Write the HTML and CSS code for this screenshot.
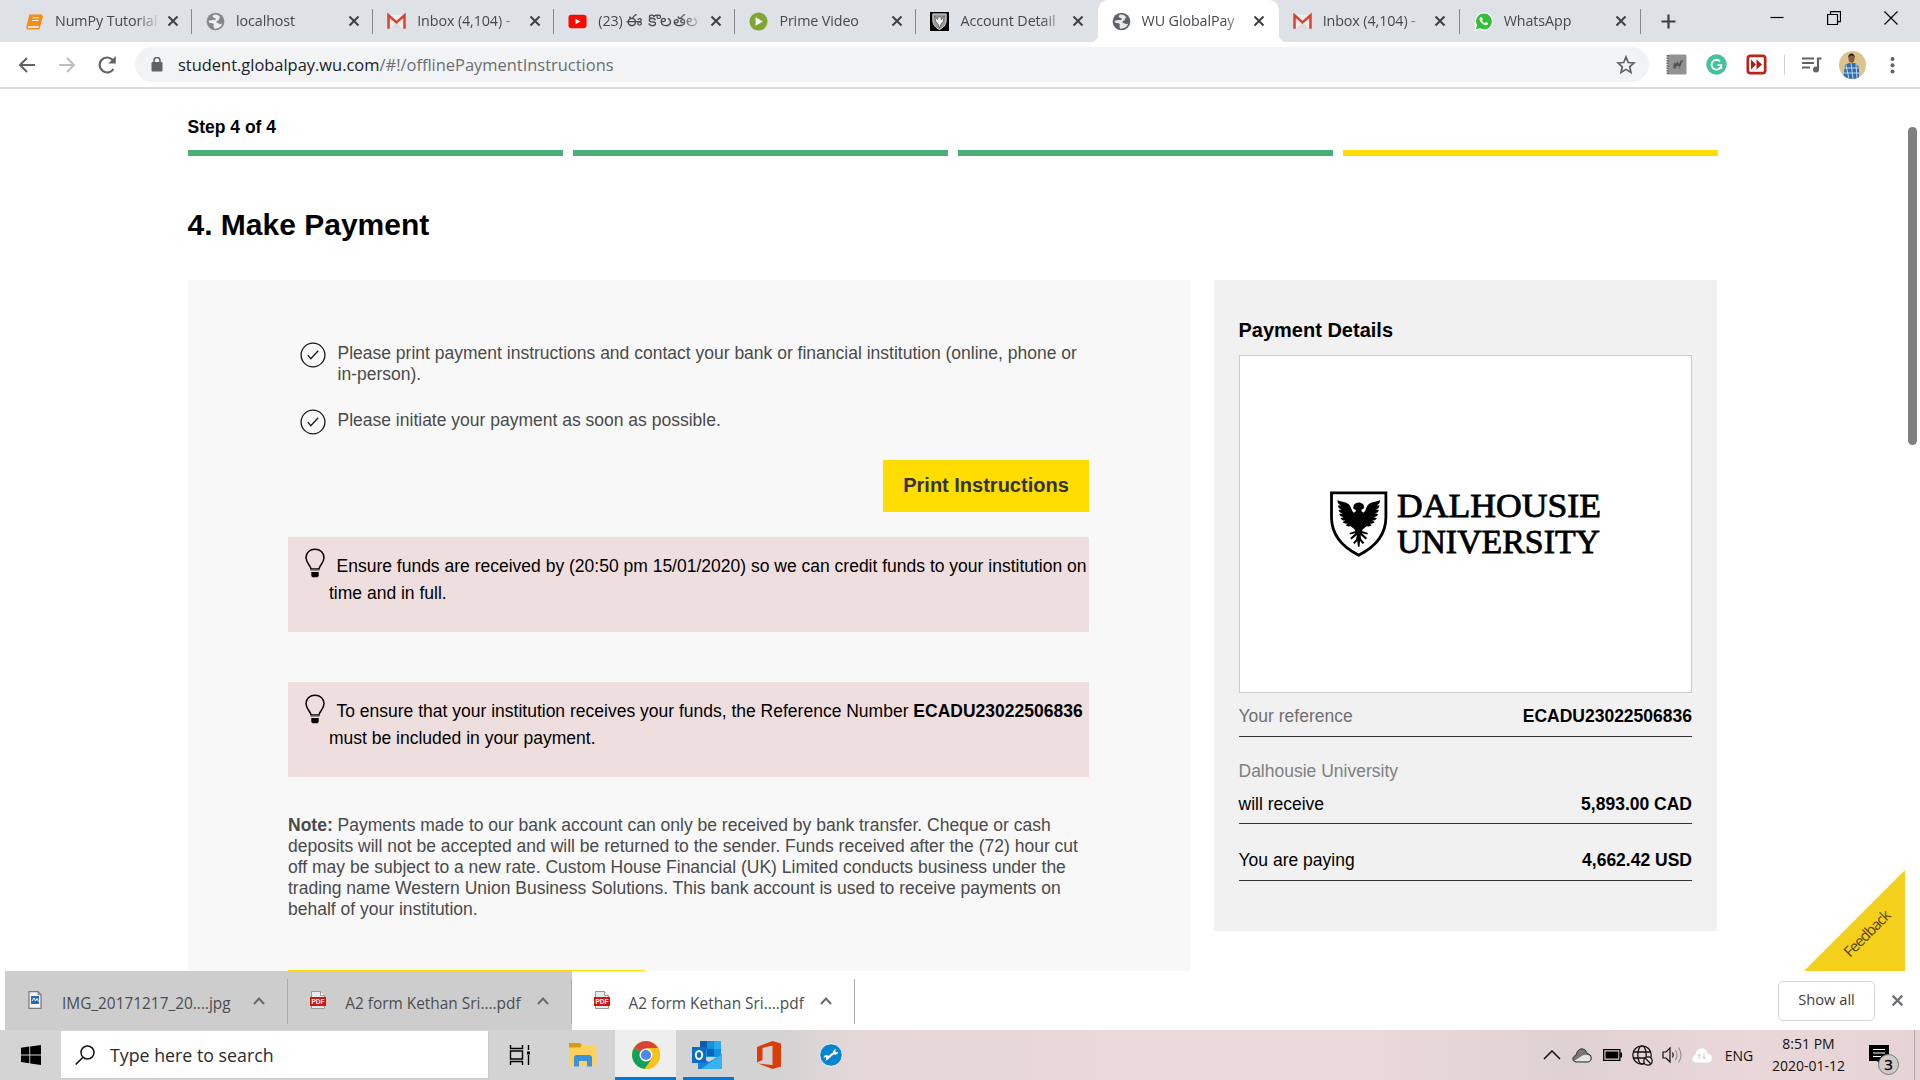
FILE: index.html
```html
<!DOCTYPE html>
<html lang="en">
<head>
<meta charset="utf-8">
<title>WU GlobalPay</title>
<link rel="stylesheet" href="styles.css">
</head>
<body>
<svg width="0" height="0" class="defs" aria-hidden="true">
  <defs>
    <symbol id="x" viewBox="0 0 12 12"><path d="M1.500 1.500l9 9M10.500 1.500l-9 9" stroke="currentColor" stroke-width="2" fill="none"/></symbol>
    <symbol id="globe" viewBox="0 0 20 20"><circle cx="10" cy="10" r="9.300" fill="currentColor"/><path d="M9 2.600c-1.800.5-2.500 2-1.500 3 1 .9 2.600.3 2.700 1.700.1 1.300-1.600 1.200-3.200 1.200-1.400 0-2.200.9-4.300.5.1 1.200.5 2 1.200 2.500 1.300.2 2.600-.1 3.600.7 1 .7.7 1.600.4 2.500-.3 1 .6 1.400.8 2.800 3.800.4 7.600-1.800 8.400-5.600-1.500 1.400-2.600 1.200-3.400.3-.9-1-2.600-.5-2.700-1.800-.1-1.600 2.100-1 2.500-2.300.3-1.200.5-2 1.700-2.300C13.600 3.400 11.500 2.300 9 2.600z" fill="#fff" opacity=".85"/></symbol>
    <symbol id="gmail" viewBox="0 0 20 16"><path d="M1 1h18v14H1z" fill="#eee"/><path d="M4 15l6-6 6 6z" fill="#ddd"/><path d="M1.600 15.500V1.500L10 9l8.400-7.500v14" fill="none" stroke="#d8412f" stroke-width="2.600"/></symbol>
    <symbol id="pdf" viewBox="0 0 18 18"><path d="M2.500.5h9l4 4v13h-13z" fill="#e9e9e9" stroke="#999"/><path d="M11.500.5v4h4" fill="#fff" stroke="#999"/><path d="M1 6h16v9H1z" fill="#d8120c"/><text x="9" y="13" font-size="6.500" font-weight="700" fill="#fff" text-anchor="middle" font-family="Liberation Sans, sans-serif">PDF</text></symbol>
    <symbol id="up" viewBox="0 0 12 8"><path d="M1 7l5-5.500L11 7" fill="none" stroke="#6a6a6a" stroke-width="2"/></symbol>
    <symbol id="check" viewBox="0 0 26 26"><circle cx="13" cy="13" r="11.900" fill="none" stroke="#1a1a1a" stroke-width="1.300"/><path d="M7.800 13.200l3 3.500 7.400-7.900" fill="none" stroke="#1a1a1a" stroke-width="1.300"/></symbol>
    <symbol id="bulb" viewBox="0 0 20 30"><path d="M6 21c-.3-3.500-5-6-5-11.500C1 4.500 5 1.200 10 1.200s9 3.300 9 8.300C19 15 14.300 17.500 14 21z" fill="none" stroke="#000" stroke-width="1.500"/><path d="M5.500 21.500h9v1.300h-9z" fill="#777"/><path d="M6.300 24h7.400v4l-1.200 1.200h-5L6.300 28z"/></symbol>
  </defs>
</svg>

<header class="tabs">
  <div class="tab"><svg class="fav" viewBox="0 0 20 20"><path d="M5.500 2.500h12.500l-3 12.500H2.500z" fill="#f68c12"/><path d="M5.500 2.500L2.300 15.500q-.3 2.200 1.700 2.200h10.500L18.300 4" fill="none" stroke="#f68c12" stroke-width="1.700"/><path d="M8 6h7M7.300 9h7M3.500 15.800h11" stroke="#fff" stroke-width="1.200"/></svg><span class="tab-name">NumPy Tutorial</span><svg class="close"><use href="#x"/></svg></div>
  <div class="tab"><svg class="fav gray"><use href="#globe"/></svg><span class="tab-name">localhost</span><svg class="close"><use href="#x"/></svg></div>
  <div class="tab"><svg class="fav"><use href="#gmail"/></svg><span class="tab-name">Inbox (4,104) -</span><svg class="close"><use href="#x"/></svg></div>
  <div class="tab"><svg class="fav" viewBox="0 0 20 20"><rect x=".5" y="3" width="19" height="14" rx="3" fill="#f60c00"/><path d="M8 7v6l5-3z" fill="#fff"/></svg><span class="tab-name">(23) <span class="telugu">ఈ కొలతల</span></span><svg class="close"><use href="#x"/></svg></div>
  <div class="tab"><svg class="fav" viewBox="0 0 20 20"><circle cx="10" cy="10" r="9.500" fill="#7fa534"/><path d="M7 5.500v9l7.500-4.500z" fill="#fff"/></svg><span class="tab-name">Prime Video</span><svg class="close"><use href="#x"/></svg></div>
  <div class="tab last"><svg class="fav" viewBox="0 0 20 20"><path d="M0 0h20v20H0z"/><path d="M3 2h14v7c0 4.500-3 7.500-7 9.500-4-2-7-5-7-9.500z" fill="#999" stroke="#ddd"/><path d="M5 4l1 6 2.500 3 1.500 4 1.500-4L14 10l1-6-3 4-.5-3h-3L8 8z" fill="#eee" stroke="#333" stroke-width=".6"/></svg><span class="tab-name">Account Detail</span><svg class="close"><use href="#x"/></svg></div>
  <div class="tab active"><svg class="fav dark"><use href="#globe"/></svg><span class="tab-name">WU GlobalPay</span><svg class="close"><use href="#x"/></svg></div>
  <div class="tab"><svg class="fav"><use href="#gmail"/></svg><span class="tab-name">Inbox (4,104) -</span><svg class="close"><use href="#x"/></svg></div>
  <div class="tab"><svg class="fav" viewBox="0 0 20 20"><path d="M1 19l1.500-5A9 9 0 1 1 6 17.700z" fill="#35bd3c" stroke="#fff" stroke-width="1.300"/><path d="M6.500 5.500c-1.500 1.600-.5 4 1.600 6s4.600 3.200 6.300 1.600c.5-.6.500-1.200.2-1.500l-1.900-1-1.400 1.200c-1.300-.6-2.300-1.600-2.900-2.700l.9-1.200L8.500 5.500z" fill="#fff"/></svg><span class="tab-name">WhatsApp</span><svg class="close"><use href="#x"/></svg></div>
  <svg class="plus" viewBox="0 0 15 15"><path d="M7.500.5v14M.5 7.500h14" stroke="#3c4043" stroke-width="2.200"/></svg>
  <div class="window-buttons">
    <svg viewBox="0 0 14 14"><path d="M.5 6.500h13" stroke="#000" stroke-width="1.200"/></svg>
    <svg viewBox="0 0 14 14"><path d="M.6 3.500h9.900v10H.6zM3.500 3.500V.6h10v10h-3" fill="none" stroke="#000" stroke-width="1.200"/></svg>
    <svg viewBox="0 0 14 14"><path d="M.5.500l13 13M13.500.5l-13 13" stroke="#000" stroke-width="1.200"/></svg>
  </div>
</header>

<nav class="toolbar">
  <div class="cell"><svg width="18" height="16" viewBox="0 0 18 16"><path d="M17 8H2M9 1L2 8l7 7" fill="none" stroke="#5f6368" stroke-width="2"/></svg></div>
  <div class="cell"><svg width="18" height="16" viewBox="0 0 18 16"><path d="M1 8h15M9 1l7 7-7 7" fill="none" stroke="#bdbfc2" stroke-width="2"/></svg></div>
  <div class="cell"><svg width="19" height="18" viewBox="0 0 19 18"><path d="M15.500 13A7.500 7.500 0 1 1 14.500 3.700l2 2.200" fill="none" stroke="#5f6368" stroke-width="2.200"/><path d="M17.800 0v7.500h-7.500z" fill="#5f6368"/></svg></div>
  <div class="omnibox">
    <svg width="12" height="15" viewBox="0 0 12 15"><rect x=".5" y="5" width="11" height="9.500" rx="1.200" fill="#5f6368"/><path d="M3 6V3.500a3 3 0 0 1 6 0V6" fill="none" stroke="#5f6368" stroke-width="1.600"/></svg>
    <span class="url"><b>student.globalpay.wu.com</b>/#!/offlinePaymentInstructions</span>
    <svg width="20" height="19" viewBox="0 0 20 19"><path d="M10 2l2.300 5.500 5.700.5-4.300 3.800 1.300 5.700-5-3.100-5 3.100 1.300-5.700L2 8l5.700-.5z" fill="none" stroke="#5f6368" stroke-width="1.700"/></svg>
  </div>
  <div class="tools">
    <div class="cell"><svg width="21" height="21" viewBox="0 0 21 21"><rect x="1.500" y=".5" width="19" height="20" rx="1.500" fill="#929292"/><path d="M1.500 1v19" stroke="#666" stroke-width="2" stroke-dasharray="1.500 1"/><path d="M7.500 14.500V10.500l1.500-2 1.200 1.200L11.500 7.500l1.200 2 .8.300 1-3.300h2.500v1.300h-1.300l-1 4.200h-.6v2.500h-.8V12h-2.600l-1.500 2.500z" fill="#505050"/></svg></div>
    <div class="cell"><svg width="21" height="21" viewBox="0 0 21 21"><circle cx="10.500" cy="10.500" r="10.200" fill="#43c39a"/><path d="M14 7.300A4.900 4.900 0 1 0 15.300 11.200H11.500M15.300 11v4" fill="none" stroke="#fff" stroke-width="1.800"/></svg></div>
    <div class="cell"><svg width="21" height="21" viewBox="0 0 21 21"><rect x=".5" y=".5" width="20" height="20" rx="4" fill="#b92318"/><rect x="3.200" y="3.200" width="14.600" height="14.600" rx="1" fill="#fff"/><path d="M5 5.500l5 5-5 5zM10.500 5.500l5.500 5-5.500 5z" fill="#a81d14"/></svg></div>
    <i class="divider"></i>
    <div class="cell music"><svg width="20" height="17" viewBox="0 0 20 17"><path d="M0 2.500h12M0 7h12M0 11.500h8" stroke="#5f6368" stroke-width="2.100"/><path d="M19.500 2.500H16v11" fill="none" stroke="#5f6368" stroke-width="2.200"/><circle cx="14" cy="13.500" r="3" fill="#5f6368"/></svg></div>
    <div class="cell avatar"><svg width="27" height="28" viewBox="0 0 27 28"><defs><clipPath id="face"><ellipse cx="13.500" cy="14" rx="13.500" ry="14"/></clipPath></defs><g clip-path="url(#face)"><path d="M0 0h27v28H0z" fill="#dcc58c"/><path d="M6 14l4-2h6l4 4v12H4z" fill="#2f6cb0"/><path d="M7 14l3 14M12 12l2 16M17 13l1 15M5 17h15M4 22h16" stroke="#c3d7ea" stroke-width="1"/><ellipse cx="12.500" cy="7.500" rx="3" ry="4.300" fill="#8a5b3f"/><path d="M9 7c0-6 7-6 7 0l-1.500-2.500h-4z" fill="#1c1715"/></g></svg></div>
    <div class="cell dots"><svg width="5" height="18" viewBox="0 0 5 18"><g fill="#5f6368"><circle cx="2.500" cy="3" r="2"/><circle cx="2.500" cy="9.200" r="2"/><circle cx="2.500" cy="15.400" r="2"/></g></svg></div>
  </div>
</nav>

<main class="page">
  <p class="step">Step 4 of 4</p>
  <div class="progress"><i></i><i></i><i></i><i class="current"></i></div>
  <h1>4. Make Payment</h1>
  <div class="columns">
    <section class="instructions">
      <div class="item"><svg><use href="#check"/></svg><p>Please print payment instructions and contact your bank or financial institution (online, phone or<br>in-person).</p></div>
      <div class="item"><svg><use href="#check"/></svg><p>Please initiate your payment as soon as possible.</p></div>
      <button class="print">Print Instructions</button>
      <div class="alert"><svg><use href="#bulb"/></svg><p>Ensure funds are received by (20:50 pm 15/01/2020) so we can credit funds to your institution on<br>time and in full.</p></div>
      <div class="alert second"><svg><use href="#bulb"/></svg><p>To ensure that your institution receives your funds, the Reference Number <b>ECADU23022506836</b><br>must be included in your payment.</p></div>
      <p class="note"><b>Note:</b> Payments made to our bank account can only be received by bank transfer. Cheque or cash<br>deposits will not be accepted and will be returned to the sender. Funds received after the (72) hour cut<br>off may be subject to a new rate. Custom House Financial (UK) Limited conducts business under the<br>trading name Western Union Business Solutions. This bank account is used to receive payments on<br>behalf of your institution.</p>
      <div class="next-button"></div>
    </section>
    <aside class="details">
      <h2>Payment Details</h2>
      <div class="logo">
        <svg width="280" height="76" viewBox="-4 -4 280 76">
          <path d="M1.500 2.800h54.400v24.500C55.900 46 44 57.500 28.700 65.200 13.400 57.500 1.500 46 1.500 27.300z" fill="#fff" stroke="#000" stroke-width="2.800"/>
          <path d="M7.500 10c3.500 2.500 8 1 11.500 4.500 2.300 2.500 2.500 6 4.500 8 1.800.3 2.600-1.200 2.400-2.600l-2.700-1.400.5-3.400c2-3.400 7-3.500 9.300-.8 1.400 1.600 1.200 3.400.4 4.500l-2 .6c0 1.600.8 3.200 2.500 3.100 2-2 2.200-5.500 4.500-8C42 11 46.500 12.500 50 10c.2 3-1 4.500-3.500 5.200l3 .3c-.3 2.400-1.600 3.500-4 3.900l3.400.5c-.7 2.300-2 3.200-4.300 3.400l3.500.8c-.8 2.200-2.300 3-4.500 3l3.200 1.100c-1 2-2.700 2.600-4.800 2.300l2.700 1.500c-1.300 1.700-3 2-5 1.500l2 1.800c-1.500 1.300-3.300 1.400-5 .6-1.600 2-4.700 3-4.700 5.200l6 1.800-.8 1.600-5.400-1.600 5.300 5-1.300 1.600-5.300-4.500.8 4.300 3 3.500-1.500 1.300-2.700-3-.6 5.700h-1.600l-.6-5.700-2.700 3-1.500-1.300 3-3.500.8-4.300-5.300 4.500-1.300-1.600 5.300-5-5.400 1.600-.8-1.600 6-1.800c0-2.200-3.100-3.200-4.700-5.200-1.700.8-3.500.7-5-.6l2-1.800c-2 .5-3.700.2-5-1.500l2.700-1.500c-2.100.3-3.800-.3-4.800-2.300l3.200-1.100c-2.200 0-3.700-.8-4.500-3l3.500-.8c-2.300-.2-3.600-1.100-4.300-3.400l3.400-.5c-2.400-.4-3.700-1.500-4-3.900l3-.3C8.500 14.500 7.300 13 7.500 10z"/>
          <g font-family="Liberation Serif, serif" font-size="33.500" stroke="#000" stroke-width=".8">
            <text x="67" y="27" textLength="204" lengthAdjust="spacingAndGlyphs">DALHOUSIE</text>
            <text x="67" y="62.600" textLength="203" lengthAdjust="spacingAndGlyphs">UNIVERSITY</text>
          </g>
        </svg>
      </div>
      <div class="row ref"><span class="muted">Your reference</span><b>ECADU23022506836</b></div>
      <p class="payee">Dalhousie University</p>
      <div class="row receive"><span>will receive</span><b>5,893.00 CAD</b></div>
      <div class="row paying"><span>You are paying</span><b>4,662.42 USD</b></div>
    </aside>
  </div>
  <div class="scrollbar"></div>
  <div class="feedback"><svg width="101" height="101" viewBox="0 0 101 101"><path d="M101 0v101H0z" fill="#f4cf1b"/><text transform="translate(46 88) rotate(-45)" font-size="15" textLength="59" fill="#504310" font-family="Open Sans, sans-serif">Feedback</text></svg></div>
</main>

<div class="downloads">
  <div class="file old"><svg viewBox="0 0 18 18"><path d="M3 .7h9l3 3v13.600H3z" fill="#f4f4f4" stroke="#777" stroke-width="1.200"/><path d="M12 .7v3h3" fill="none" stroke="#777"/><path d="M5 5h8v8H5z" fill="#2868b8"/><path d="M6 10l2-3 1.500 3L11 7.500l1.500 3" fill="none" stroke="#fff"/></svg><span>IMG_20171217_20....jpg</span><svg class="chev"><use href="#up"/></svg></div>
  <div class="file old"><svg><use href="#pdf"/></svg><span>A2 form Kethan Sri....pdf</span><svg class="chev"><use href="#up"/></svg></div>
  <div class="file"><svg><use href="#pdf"/></svg><span>A2 form Kethan Sri....pdf</span><svg class="chev"><use href="#up"/></svg></div>
  <button class="show-all">Show all</button>
  <svg class="dismiss"><use href="#x"/></svg>
</div>

<footer class="taskbar">
  <div class="start"><svg width="20" height="20" viewBox="0 0 20 20"><path d="M0 2.800l8.300-1.200v7.900H0zM9.200 1.500L20 0v9.500H9.200zM0 10.400h8.300v7.900L0 17.100zM9.200 10.400H20V20L9.200 18.500z"/></svg></div>
  <div class="search"><svg width="20" height="20" viewBox="0 0 20 20"><circle cx="12.500" cy="7.500" r="6.500" fill="none" stroke="#111" stroke-width="1.500"/><path d="M8 12.300L.7 19.500" stroke="#111" stroke-width="1.600"/></svg><span>Type here to search</span></div>
  <div class="app"><svg width="22" height="20" viewBox="0 0 22 20"><path d="M1.500 0v3.500h12V0M1.500 20v-3.500h12V20M1.500 6h12v8h-12zM19.500 0v5M19.500 10v10" fill="none" stroke="#000" stroke-width="1.400"/><path d="M18 6.500h3v3h-3z"/></svg></div>
  <div class="app explorer"><svg width="28" height="24" viewBox="0 0 28 24"><path d="M0 0h11l3 3h13.500v20H0z" fill="#ffd05b"/><path d="M0 0h11l2 2-2 2.500H0z" fill="#dc9a08"/><path d="M5 23.500V15q0-3 3-3h12q3 0 3 3v8.500h-5V18h-8v5.500z" fill="#3994dd"/></svg></div>
  <div class="app open"><svg width="28" height="28" viewBox="0 0 28 28"><circle cx="14" cy="14" r="14" fill="#fbc116"/><path d="M14 14L1.900 7A14 14 0 0 1 26.100 7z" fill="#da4437"/><path d="M14 14L1.900 7A14 14 0 0 0 12.500 27.900L20 17.500z" fill="#10a05b"/><path d="M14 7h12.100A14 14 0 0 1 13 28l7-10.500z" fill="#fbc116"/><circle cx="14" cy="14" r="6.500" fill="#fff"/><circle cx="14" cy="14" r="5.100" fill="#4d86ee"/></svg></div>
  <div class="app outlook"><svg width="30" height="28" viewBox="0 0 30 28"><path d="M8 0h21v16H8z" fill="#1490df"/><path d="M8 0h7v8H8z" fill="#0a5cad"/><path d="M22 0h7v8h-7z" fill="#2aa9ed"/><path d="M15 8h7v7h-7z" fill="#0b64b5"/><path d="M6 14l11 7 13-8v15H6z" fill="#1b83d8"/><path d="M30 13v15H9z" fill="#35b2ef"/><path d="M0 6h14v16H0z" fill="#0b6cc7"/><ellipse cx="7" cy="14" rx="3.200" ry="4" fill="none" stroke="#fff" stroke-width="2"/></svg></div>
  <div class="app"><svg width="24" height="28" viewBox="0 0 24 28"><path d="M0 6L15.500 0 24 2.500v23L15.500 28 1 22.500l14.500 1.500V4.500L5.500 7v12L0 21.500z" fill="#dc3c08"/></svg></div>
  <div class="app"><svg width="24" height="24" viewBox="0 0 24 24"><circle cx="12" cy="12" r="11.300" fill="#0785cf" stroke="#f5f5f5"/><path d="M7.500 15.800l9-7.200" stroke="#fff" stroke-width="2.200"/><path d="M14.300 10.500c-.8-2.600 1-4.600 3.200-4.200L15.700 8l1 1.500 2.400-.7c0 2.400-2.400 3.600-4.300 2.400zM9.500 13.500c.8 2.300-1.200 4.300-3.400 3.800l1.600-1.700-.9-1.500-2.200.6c0-2.300 2.200-3.500 4.100-2.400z" fill="#fff"/></svg></div>
  <div class="tray">
    <div><svg width="18" height="10" viewBox="0 0 18 10"><path d="M1 9l8-8 8 8" fill="none" stroke="#111" stroke-width="1.500"/></svg></div>
    <div><svg width="20" height="15" viewBox="0 0 20 15"><path d="M4 14C-.5 13.500 0 8 4 7.500 4.500 3 8 0 11 1c3 .7 3.500 3 4 4.500 5 .5 6 7.500 1 8.500z" fill="#777" stroke="#333"/><path d="M2.500 12.800l8-5.300c3-1.500 8-.5 8 2.500 0 2.500-1.500 3.300-2.800 3.300H4.500z" fill="#e5e5e5"/></svg></div>
    <div><svg width="19" height="12" viewBox="0 0 19 12"><path d="M.7.700h16.200v10.600H.7z" fill="none" stroke="#000" stroke-width="1.300"/><path d="M2.500 2.500h12.800v7H2.500zM17.300 3.500H19v5h-1.700z"/></svg></div>
    <div><svg width="21" height="21" viewBox="0 0 21 21"><g fill="none" stroke="#111" stroke-width="1.300"><circle cx="10" cy="10" r="9.200"/><ellipse cx="10" cy="10" rx="4.200" ry="9.200"/><path d="M1 7h18M1 13h18"/></g><circle cx="16" cy="16" r="4.200" fill="#e8d8d9" stroke="#111" stroke-width="1.300"/><path d="M13 13l6 6" stroke="#111" stroke-width="1.300"/></svg></div>
    <div><svg width="21" height="18" viewBox="0 0 21 18"><path d="M1 6h3l4-4v14l-4-4H1z" fill="none" stroke="#111" stroke-width="1.200"/><path d="M10.500 6.500q1.500 2.500 0 5" fill="none" stroke="#111" stroke-width="1.200"/><path d="M13.500 4q3 5 0 10M16.500 1.500q5 7.500 0 15" fill="none" stroke="#998f90" stroke-width="1.200"/></svg></div>
    <div><svg width="20" height="15" viewBox="0 0 20 15"><path d="M4 14.500C-.8 14-1 8 3.500 7 4 2 7 0 10.500.5c3.500.3 4.500 2.500 5 5 5.500 1 6 8 1 9z" fill="#fff"/><path d="M7 11V6.500L5.500 8M7 6.500L8.500 8M12 5v5.500L10.500 9M12 10.500L13.500 9" fill="none" stroke="#e3cfd1" stroke-width="1.100"/></svg></div>
    <div class="lang">ENG</div>
    <div class="clock"><span class="time">8:51 PM</span><span class="date">2020-01-12</span></div>
    <div class="notice"><svg width="31" height="32" viewBox="0 0 31 32"><path d="M1 1h20v16h-8v4l-4-4H1z"/><path d="M5 5.500h12M5 9h12M5 12.500h8" stroke="#fff" stroke-width="1.200"/><circle cx="20.500" cy="20.500" r="10" fill="#cfcaca" stroke="#777"/><text x="20.500" y="26" font-size="15" text-anchor="middle" stroke="#000" stroke-width=".4" font-family="Open Sans, sans-serif">3</text></svg></div>
  </div>
</footer>
</body>
</html>
```
FILE: styles.css
```css
* { box-sizing: border-box; }
body {
  margin: 0;
  width: 1920px;
  height: 1080px;
  overflow: hidden;
  display: flex;
  flex-direction: column;
  font-family: "Open Sans", "Noto Sans", sans-serif;
  background: #fff;
}
p, h1, h2 { margin: 0; }
svg { display: block; flex: none; }
.defs { position: absolute; }

/* Tab strip */
.tabs { height: 42px; flex: none; display: flex; background: #dee1e6; padding-left: 11px; }
.tab { width: 181.100px; height: 42px; flex: none; display: flex; align-items: center; padding-left: 14px; position: relative; }
.tab::after { content: ""; position: absolute; right: 0; top: 9px; width: 1px; height: 25px; background: #85888c; }
.tab.last::after, .tab.active::after { display: none; }
.tab.active { background: #fff; border-radius: 10px 10px 0 0; }
.tab.active::before {
  content: ""; position: absolute; left: -8px; right: -8px; bottom: 0; height: 8px;
  background: radial-gradient(circle at 0 0, transparent 8px, #fff 8.500px) left / 8px 8px no-repeat,
    radial-gradient(circle at 100% 0, transparent 8px, #fff 8.500px) right / 8px 8px no-repeat;
}
.fav { width: 19px; height: 19px; margin-right: 11px; color: #85878a; }
.fav.dark { color: #5f6368; }
.tab-name {
  width: 102px; font-size: 14.300px; letter-spacing: -0.100px; line-height: 24px; height: 24px; color: #45494d;
  white-space: nowrap; overflow: hidden; margin-right: 9.500px;
  -webkit-mask-image: linear-gradient(90deg, #000 82px, transparent 106px);
  mask-image: linear-gradient(90deg, #000 82px, transparent 106px);
}
.telugu { font-size: 16.500px; line-height: 20px; letter-spacing: 0.500px; }
.close { width: 12px; height: 12px; color: #3c4043; }
.plus { width: 15px; height: 15px; margin: 14px 0 0 20px; }
.window-buttons { margin: 11px 22px 0 auto; display: flex; gap: 43px; }
.window-buttons svg { width: 14px; height: 14px; }

/* Address bar */
.toolbar { height: 47px; flex: none; display: flex; align-items: center; padding: 0 9px 0 7px; border-bottom: 2px solid #dadce2; }
.cell { width: 40px; display: flex; justify-content: center; }
.omnibox { width: 1514px; height: 35px; margin-left: 8px; border-radius: 18px; background: #f1f3f4; display: flex; align-items: center; padding: 0 13px 0 16px; }
.url { margin: 0 auto 0 15px; font-size: 16.450px; color: #6a6e72; }
.url b { font-weight: 400; color: #202124; }
.tools { display: flex; align-items: center; margin-left: 7px; }
.divider { width: 1px; height: 20px; background: #cfd1d4; margin: 0 8px; }
.music { width: 38px; }
.avatar { width: 42px; }
.dots { width: 38px; }

/* Payment page */
.page { height: 882px; flex: none; overflow: hidden; position: relative; padding: 28px 202px 0 187.500px; font: 17.500px/21px "Liberation Sans", Arial, sans-serif; }
.step { font-weight: 700; line-height: 20px; }
.progress { display: grid; grid-template-columns: repeat(4, 375px); gap: 10px; margin-top: 13px; height: 6px; }
.progress i { background: #4caf7a; }
.progress .current { background: #ffdd00; }
h1 { font-size: 30px; line-height: 34px; margin-top: 52px; }
.columns { display: flex; gap: 24px; align-items: flex-start; margin-top: 38px; }
.instructions { width: 1002px; height: 700px; background: #f8f8f8; padding: 62px 100.500px 0; border-radius: 3px 3px 0 0; display: flex; flex-direction: column; color: #4a4a4a; }
.item { height: 42px; flex: none; display: flex; gap: 12px; padding-left: 11.500px; white-space: nowrap; }
.item svg { width: 26px; height: 26px; }
.item p { padding-top: 1px; }
.item + .item { height: 26px; margin-top: 25px; }
.print { align-self: flex-end; flex: none; width: 206px; height: 52px; margin-top: 25px; padding: 0 0 2px; border: 0; background: #ffdd00; color: #333; font: 700 20px "Liberation Sans", sans-serif; }
.alert { height: 95px; flex: none; margin-top: 25px; background: #efdede; color: #000; display: flex; padding: 11px 0 0 17px; white-space: nowrap; }
.alert.second { margin-top: 50px; padding-top: 12px; }
.alert svg { width: 20px; height: 30px; }
.alert p { line-height: 27px; margin: 5px 0 0 4px; text-indent: 7.500px; }
.alert.second p { margin-top: 4px; }
.note { margin-top: 38px; flex: none; white-space: nowrap; }
.next-button { width: 357px; flex: 0 0 60px; margin-top: 50px; background: #ffdd00; }

.details { width: 503px; height: 651px; background: #f1f1f1; padding: 38px 25px 0; color: #000; }
.details h2 { font-size: 20px; line-height: 24px; }
.logo { height: 338px; margin-top: 13px; border: 1px solid #ccc; background: #fff; display: flex; align-items: center; justify-content: center; padding-left: 2px; }
.row { display: flex; justify-content: space-between; border-bottom: 1px solid #333; line-height: 22px; }
.row b { margin-right: -0.500px; }
.ref { padding: 12px 0 9px; }
.muted { color: #6f6f6f; }
.payee { color: #808080; margin-top: 24px; }
.receive { padding: 11px 0 8px; }
.paying { padding: 25px 0 9px; }

.scrollbar { position: absolute; right: 3px; top: 38px; width: 9px; height: 318px; border-radius: 5px; background: #808080; }
.feedback { position: absolute; right: 15px; bottom: 0; }

/* Download shelf */
.downloads { height: 59px; flex: none; display: flex; align-items: center; padding-left: 5px; }
.file { width: 283.300px; height: 59px; display: flex; align-items: center; padding-left: 21px; position: relative; font-size: 15.400px; color: #4a4d51; }
.file.old { background: #cdcdcd; }
.file::after { content: ""; position: absolute; right: 0; top: 8px; width: 1px; height: 45px; background: #aaa; }
.file svg { width: 18px; height: 18px; margin-bottom: 2px; }
.file span { margin: 6px auto 0 18px; white-space: nowrap; }
.file .chev { width: 12px; height: 8px; margin: 0 23px 0 0; }
.show-all { width: 97px; height: 40px; margin: 0 16px 0 auto; padding: 0 0 3px; border: 1px solid #d5d7da; border-radius: 5px; background: #fff; color: #3c4043; font: 14.700px "Open Sans", sans-serif; }
.dismiss { width: 13px; height: 13px; margin-right: 16px; color: #6c7075; }

/* Taskbar */
.taskbar { height: 50px; flex: none; display: flex; background: linear-gradient(90deg, #d5d4d4 0, #d4d3d3 780px, #e6d7d8 860px, #ead8da 1100px, #ead8da 1380px, #dfd1d2 1570px, #ead7d9 1750px, #e6d3d5 100%); }
.start { width: 61px; display: flex; align-items: center; justify-content: center; }
.search { width: 428px; height: 48px; margin-top: 1px; background: #fff; border: 1px solid #ccc; border-width: 0 1px 1px 0; display: flex; align-items: center; padding-left: 14px; font-size: 17.800px; color: #2b2b2b; }
.search span { margin-left: 15px; }
.app { width: 62px; display: flex; align-items: center; justify-content: center; position: relative; }
.app.explorer { width: 64px; }
.app.open { background: #eee; width: 61px; }
.app.open::after, .outlook::after { content: ""; position: absolute; left: 0; right: 0; bottom: 0; height: 3px; background: #0078d7; }
.app.outlook::after { left: 7px; right: 4px; }
.tray { margin-left: auto; display: flex; color: #111; font-size: 14px; }
.tray div { width: 30px; display: flex; align-items: center; justify-content: center; }
.tray .lang { width: 44px; }
.tray .clock { width: 95px; flex-direction: column; line-height: 22px; font-size: 14px; padding-bottom: 1px; }
.tray .notice { width: 64px; padding: 9px 16px 0 6px; position: relative; }
.notice::after { content: ""; position: absolute; right: 5px; top: 0; width: 1px; height: 50px; background: #b5a9aa; }
```
